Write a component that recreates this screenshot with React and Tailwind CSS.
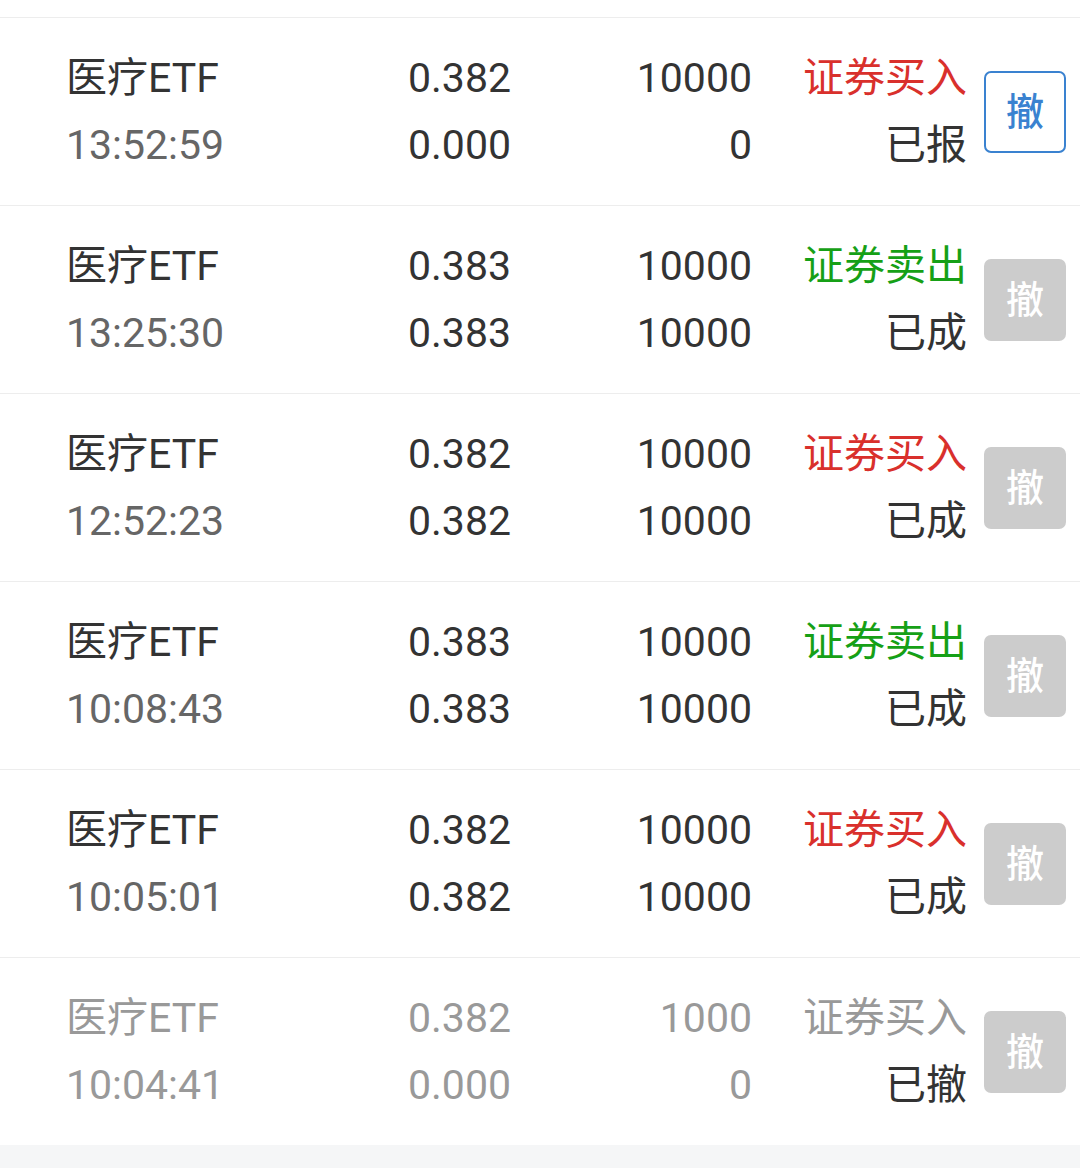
import React from "react";

const rows = [
  { name: "医疗ETF", time: "13:52:59", p1: "0.382", p2: "0.000", q1: "10000", q2: "0", type: "证券买入", kind: "buy", status: "已报", active: true },
  { name: "医疗ETF", time: "13:25:30", p1: "0.383", p2: "0.383", q1: "10000", q2: "10000", type: "证券卖出", kind: "sell", status: "已成" },
  { name: "医疗ETF", time: "12:52:23", p1: "0.382", p2: "0.382", q1: "10000", q2: "10000", type: "证券买入", kind: "buy", status: "已成" },
  { name: "医疗ETF", time: "10:08:43", p1: "0.383", p2: "0.383", q1: "10000", q2: "10000", type: "证券卖出", kind: "sell", status: "已成" },
  { name: "医疗ETF", time: "10:05:01", p1: "0.382", p2: "0.382", q1: "10000", q2: "10000", type: "证券买入", kind: "buy", status: "已成" },
  { name: "医疗ETF", time: "10:04:41", p1: "0.382", p2: "0.000", q1: "1000", q2: "0", type: "证券买入", kind: "cancel", status: "已撤" },
];

function Row({ r }) {
  const dim = r.kind === "cancel";
  const main = dim ? "text-[#999999]" : "text-[#333333]";
  const sub = dim ? "text-[#999999]" : "text-[#666666]";
  const typeColor =
    r.kind === "buy" ? "text-[#d9302c]" : r.kind === "sell" ? "text-[#16a016]" : "text-[#999999]";
  return (
    <div className="h-[188px] border-t border-[#ededed] flex items-center pl-[66px] pr-[14px]">
      <div className="w-[301px] flex flex-col">
        <span className={main}>{r.name}</span>
        <span className={sub}>{r.time}</span>
      </div>
      <div className={`w-[144px] flex flex-col items-end ${main}`}>
        <span>{r.p1}</span>
        <span>{r.p2}</span>
      </div>
      <div className={`w-[241px] flex flex-col items-end ${main}`}>
        <span>{r.q1}</span>
        <span>{r.q2}</span>
      </div>
      <div className="w-[215px] flex flex-col items-end">
        <span className={typeColor}>{r.type}</span>
        <span className="text-[#333333]">{r.status}</span>
      </div>
      <div className="ml-[17px]">
        {r.active ? (
          <div className="w-[82px] h-[82px] rounded-[7px] border-2 border-[#3a82d0] bg-white flex items-center justify-center text-[#3a82d0] text-[38px] leading-none font-medium">
            撤
          </div>
        ) : (
          <div className="w-[82px] h-[82px] rounded-[7px] bg-[#cccccc] flex items-center justify-center text-white text-[38px] leading-none font-medium">
            撤
          </div>
        )}
      </div>
    </div>
  );
}

export default function App() {
  return (
    <div
      className="w-[1080px] h-[1168px] bg-white flex flex-col overflow-hidden text-[41px] leading-[67px]"
      style={{ fontFamily: 'Roboto, "Noto Sans CJK SC", sans-serif' }}
    >
      <div className="h-[17px] shrink-0" />
      {rows.map((r, i) => (
        <Row key={i} r={r} />
      ))}
      <div className="flex-1 bg-[#f5f6f7]" />
    </div>
  );
}
